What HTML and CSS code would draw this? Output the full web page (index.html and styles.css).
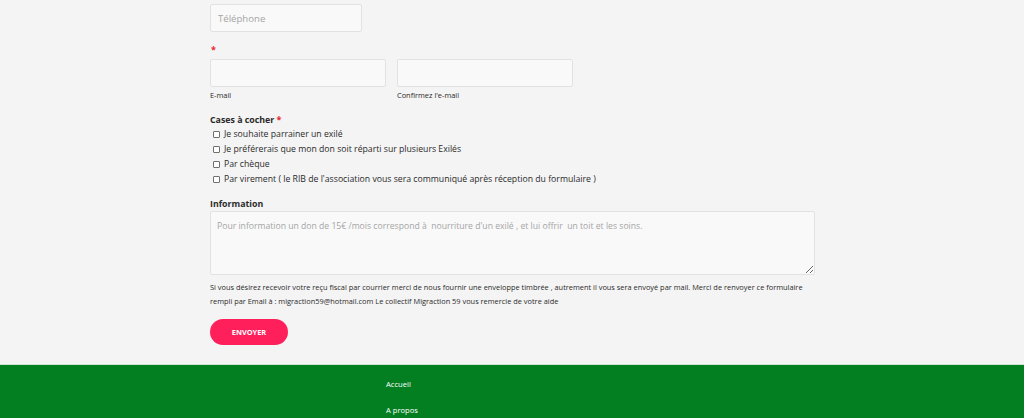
FILE: index.html
```html
<!DOCTYPE html>
<html lang="fr">
<head>
<meta charset="utf-8">
<title>Formulaire</title>
<link rel="stylesheet" href="styles.css">
</head>
<body>
<main class="page">
  <form class="form">
    <div class="field">
      <input class="input input-tel" type="text" placeholder="Téléphone">
    </div>
    <div class="field field-email">
      <span class="req req-top">*</span>
      <div class="email-row">
        <div class="email-col">
          <input class="input input-email" type="text">
          <span class="sublabel">E-mail</span>
        </div>
        <div class="email-col">
          <input class="input input-email" type="text">
          <span class="sublabel">Confirmez l'e-mail</span>
        </div>
      </div>
    </div>
    <div class="field field-checks">
      <div class="label">Cases à cocher <span class="req">*</span></div>
      <ul class="checks">
        <li class="check"><span class="box"></span>Je souhaite parrainer un exilé</li>
        <li class="check"><span class="box"></span>Je préférerais que mon don soit réparti sur plusieurs Exilés</li>
        <li class="check"><span class="box"></span>Par chèque</li>
        <li class="check"><span class="box"></span>Par virement ( le RIB de l'association vous sera communiqué après réception du formulaire )</li>
      </ul>
    </div>
    <div class="field field-info">
      <div class="label">Information</div>
      <textarea class="textarea" placeholder="Pour information un don de 15€ /mois correspond à  nourriture d'un exilé , et lui offrir  un toit et les soins."></textarea>
      <p class="help">Si vous désirez recevoir votre reçu fiscal par courrier merci de nous fournir une enveloppe timbrée , autrement il vous sera envoyé par mail. Merci de renvoyer ce formulaire rempli par Email à : migraction59@hotmail.com Le collectif Migraction 59 vous remercie de votre aide</p>
    </div>
    <button class="submit" type="button">ENVOYER</button>
  </form>
</main>
<footer class="footer">
  <nav class="footer-nav">
    <a class="footer-link" href="#">Accueil</a>
    <a class="footer-link" href="#">A propos</a>
  </nav>
</footer>
</body>
</html>
```

FILE: styles.css
```css
* { box-sizing: border-box; }
html, body { margin: 0; padding: 0; }
body {
  background: #f4f4f4;
  font-family: "Open Sans", "Noto Sans", sans-serif;
  color: #2a2a2a;
  overflow: hidden;
  height: 418px;
}
.page {
  width: 605px;
  margin: 0 auto;
  padding: 4px 0 0;
  position: relative;
  left: 0.5px;
}
.form { display: flex; flex-direction: column; }
.input {
  display: block;
  height: 28px;
  background: #f9f9f9;
  border: 1px solid #e2e2e2;
  border-radius: 2px;
  padding: 0 7px;
  font-family: inherit;
  font-size: 9.6px;
  outline: none;
}
.input::placeholder, .textarea::placeholder { color: #a5a5a5; }
.input-tel { width: 152px; }
.field-email { margin-top: 11px; }
.req { color: #e8262d; font-size: 9px; font-weight: 700; }
.req-top { display: block; height: 16px; line-height: 13px; padding-left: 1px; }
.email-row { display: flex; gap: 11px; }
.email-col { display: flex; flex-direction: column; }
.input-email { width: 176px; }
.sublabel { font-size: 7.4px; line-height: 12px; margin-top: 2px; color: #2a2a2a; }
.field-checks { margin-top: 12px; }
.label { font-size: 8.8px; font-weight: 700; color: #2a2a2a; line-height: 14px; }
.checks { list-style: none; margin: 0; padding: 0; }
.check {
  display: flex; align-items: center;
  font-size: 8.7px; line-height: 15px; color: #2a2a2a;
  padding-left: 3px;
}
.box {
  width: 7px; height: 7px;
  border: 1px solid #707070;
  border-radius: 1px;
  background: #fff;
  margin-right: 4px;
  flex: none;
}
.field-info { margin-top: 10px; }
.textarea {
  display: block;
  width: 605px;
  height: 64px;
  background: #f9f9f9;
  border: 1px solid #e2e2e2;
  border-radius: 2px;
  padding: 8px 6px;
  font-family: inherit;
  font-size: 8.65px;
  line-height: 12px;
  resize: vertical;
  outline: none;
}
.help {
  margin: 5px 0 0;
  font-size: 7.4px;
  line-height: 14px;
  color: #2a2a2a;
}
.submit {
  align-self: flex-start;
  margin-top: 11px;
  width: 78px;
  height: 26px;
  border: none;
  border-radius: 13px;
  background: #ff1f5b;
  color: #fff;
  font-family: inherit;
  font-weight: 700;
  font-size: 7.4px;
  cursor: pointer;
}
.footer {
  margin-top: 19px;
  background: #037f21;
  border-top: 1px solid #cfe3d2;
  height: 60px;
}
.footer-nav {
  display: flex; flex-direction: column;
  padding: 12px 0 0 386px;
  gap: 12px;
}
.footer-link {
  color: #fff;
  text-decoration: none;
  font-size: 7.6px;
  line-height: 14px;
}
```
